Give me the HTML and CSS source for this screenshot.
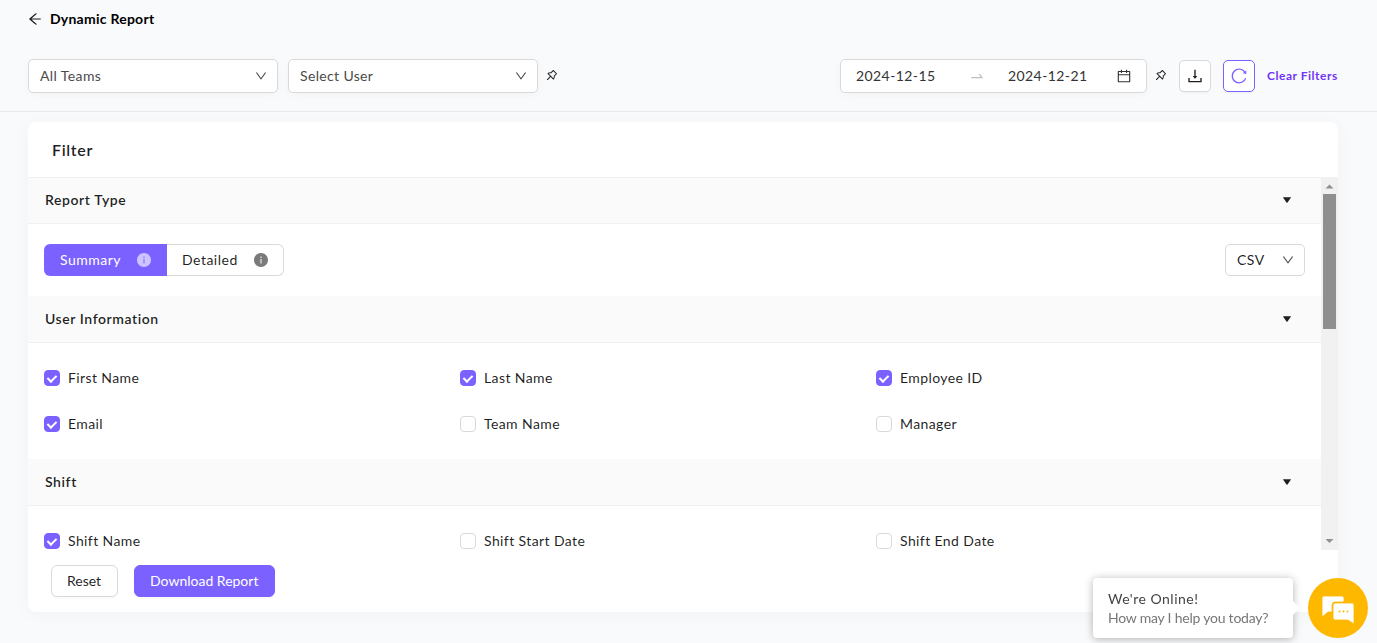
FILE: index.html
```
<!DOCTYPE html>
<html lang="en">
<head>
<meta charset="utf-8">
<title>Dynamic Report</title>
<link rel="stylesheet" href="styles.css">
</head>
<body>
<svg class="defs" aria-hidden="true">
  <symbol id="down" viewBox="64 64 896 896"><path d="M884 256h-75c-5.1 0-9.9 2.5-12.9 6.6L512 654.2 227.9 262.6c-3-4.1-7.8-6.6-12.9-6.6h-75c-6.5 0-10.3 7.4-6.5 12.7l352.6 486.1c12.8 17.6 39 17.6 51.7 0l352.6-486.1c3.9-5.3.1-12.7-6.4-12.7z"/></symbol>
  <symbol id="pin" viewBox="64 64 896 896"><path d="M878.3 392.1L631.9 145.7c-6.5-6.5-15-9.7-23.5-9.7s-17 3.2-23.5 9.7L423.8 306.9c-12.2-1.4-24.5-2-36.8-2-73.2 0-146.4 24.1-206.5 72.3a33.23 33.23 0 00-2.7 49.4l181.7 181.7-215.4 215.2a15.8 15.8 0 00-4.6 9.8l-3.4 37.2c-.9 9.4 6.6 17.4 15.9 17.4.5 0 1 0 1.5-.1l37.2-3.4c3.7-.3 7.2-2 9.8-4.6l215.4-215.4 181.7 181.7c6.5 6.5 15 9.7 23.5 9.7 9.7 0 19.3-4.2 25.9-12.4 56.3-70.3 79.7-158.3 70.2-243.4l161.1-161.1c12.9-12.8 12.9-33.8 0-46.8zM666.2 549.3l-24.5 24.5 3.8 34.4a259.92 259.92 0 01-30.4 153.9L262 408.8c12.9-7.1 26.3-13.1 40.3-17.9 27.2-9.4 55.7-14.1 84.7-14.1 9.6 0 19.3.5 28.9 1.6l34.4 3.8 24.5-24.5L608.5 224 800 415.5 666.2 549.3z"/></symbol>
  <symbol id="info" viewBox="64 64 896 896"><path d="M512 64C264.6 64 64 264.6 64 512s200.6 448 448 448 448-200.6 448-448S759.4 64 512 64zm32 664c0 4.4-3.6 8-8 8h-48c-4.4 0-8-3.6-8-8V456c0-4.4 3.6-8 8-8h48c4.4 0 8 3.6 8 8v272zm-32-344a48.01 48.01 0 010-96 48.01 48.01 0 010 96z"/></symbol>
  <symbol id="caret" viewBox="0 0 8 6"><path d="M.3.2h7.4q.4.1.1.6L4.500 5.500q-.5.5-1 0L.2.8Q-.1.3.3.2z"/></symbol>
</svg>

<header class="topbar">
  <div class="title-row">
    <svg class="icon icon-back" viewBox="64 64 896 896"><path d="M872 474H286.900l350.200-304c5.600-4.900 2.200-14-5.200-14h-88.500c-3.900 0-7.600 1.400-10.500 3.900L155 487.800a31.960 31.960 0 000 48.300L535.100 866c1.500 1.300 3.300 2 5.200 2h91.500c7.400 0 10.800-9.200 5.200-14L286.900 550H872c4.400 0 8-3.600 8-8v-60c0-4.400-3.600-8-8-8z"/></svg>
    <h1 class="title">Dynamic Report</h1>
  </div>
  <div class="toolbar">
    <div class="select">All Teams<svg class="icon icon-down"><use href="#down"/></svg></div>
    <div class="select select-user">Select User<svg class="icon icon-down"><use href="#down"/></svg></div>
    <svg class="icon icon-pin"><use href="#pin"/></svg>
    <div class="range">
      <span class="date">2024-12-15</span>
      <svg class="icon icon-swap" viewBox="0 0 1024 1024"><path d="M873.1 596.2l-164-208A32 32 0 00684 376h-64.800c-6.700 0-10.400 7.700-6.300 13l144.300 183H152c-4.400 0-8 3.600-8 8v60c0 4.400 3.600 8 8 8h695.900c26.800 0 41.700-30.800 25.200-51.800z"/></svg>
      <span class="date">2024-12-21</span>
      <svg class="icon icon-calendar" viewBox="64 64 896 896"><path d="M880 184H712v-64c0-4.400-3.600-8-8-8h-56c-4.400 0-8 3.600-8 8v64H384v-64c0-4.400-3.600-8-8-8h-56c-4.400 0-8 3.600-8 8v64H144c-17.700 0-32 14.300-32 32v664c0 17.700 14.300 32 32 32h736c17.700 0 32-14.300 32-32V216c0-17.700-14.300-32-32-32zm-40 656H184V460h656v380zM184 392V256h128v48c0 4.400 3.600 8 8 8h56c4.400 0 8-3.600 8-8v-48h256v48c0 4.400 3.600 8 8 8h56c4.400 0 8-3.600 8-8v-48h128v136H184z"/></svg>
    </div>
    <svg class="icon icon-pin icon-pin-right"><use href="#pin"/></svg>
    <div class="tool-button">
      <svg class="icon icon-tool" viewBox="64 64 896 896"><path d="M505.700 661a8 8 0 0012.600 0l112-141.700c4.100-5.200.4-12.900-6.300-12.900h-74.100V168c0-4.400-3.600-8-8-8h-60c-4.400 0-8 3.600-8 8v338.300H400c-6.700 0-10.400 7.700-6.300 12.900l112 141.800zM878 626h-60c-4.400 0-8 3.600-8 8v154H214V634c0-4.400-3.600-8-8-8h-60c-4.400 0-8 3.600-8 8v198c0 17.700 14.300 32 32 32h684c17.700 0 32-14.300 32-32V634c0-4.400-3.600-8-8-8z"/></svg>
    </div>
    <div class="tool-button tool-reload">
      <svg class="icon icon-tool" viewBox="64 64 896 896"><path d="M909.1 209.3l-56.400 44.100C775.800 155.100 656.200 92 521.900 92 290 92 102.300 279.500 102 511.500 101.700 743.700 289.800 932 521.900 932c181.300 0 335.800-115 394.600-276.100 1.500-4.200-.7-8.900-4.900-10.300l-56.700-19.500a8 8 0 00-10.100 4.800c-1.800 5-3.800 10-5.900 14.900-17.300 41-42.100 77.800-73.700 109.400A344.770 344.770 0 01655.900 829c-42.300 17.900-87.400 27-133.800 27-46.500 0-91.500-9.100-133.800-27A341.500 341.500 0 01279 755.200a342.160 342.160 0 01-73.700-109.400c-17.900-42.400-27-87.400-27-133.900s9.100-91.500 27-133.900c17.300-41 42.100-77.800 73.700-109.400 31.600-31.600 68.400-56.400 109.300-73.800 42.300-17.900 87.400-27 133.800-27 46.500 0 91.500 9.100 133.800 27a341.500 341.500 0 01109.300 73.800c9.900 9.900 19.200 20.400 27.800 31.400l-60.200 47a8 8 0 003 14.100l175.600 43c5 1.200 9.900-2.600 9.900-7.700l.8-180.900c-.1-6.600-7.800-10.300-13-6.200z"/></svg>
    </div>
    <a class="clear">Clear Filters</a>
  </div>
</header>

<main class="card">
  <h2 class="card-title">Filter</h2>
  <div class="scroll-area">
    <div class="sections">
      <div class="section-head section-head-first">Report Type<svg class="icon-caret"><use href="#caret"/></svg></div>
      <div class="report-type">
        <div class="segment">
          <div class="segment-item segment-active">Summary<svg class="icon icon-info"><use href="#info"/></svg></div>
          <div class="segment-item segment-plain">Detailed<svg class="icon icon-info"><use href="#info"/></svg></div>
        </div>
        <div class="format">CSV<svg class="icon icon-down"><use href="#down"/></svg></div>
      </div>
      <div class="section-head">User Information<svg class="icon-caret"><use href="#caret"/></svg></div>
      <div class="options">
        <label class="option"><span class="box checked"></span>First Name</label>
        <label class="option"><span class="box checked"></span>Last Name</label>
        <label class="option"><span class="box checked"></span>Employee ID</label>
        <label class="option"><span class="box checked"></span>Email</label>
        <label class="option"><span class="box"></span>Team Name</label>
        <label class="option"><span class="box"></span>Manager</label>
      </div>
      <div class="section-head">Shift<svg class="icon-caret"><use href="#caret"/></svg></div>
      <div class="options">
        <label class="option"><span class="box checked"></span>Shift Name</label>
        <label class="option"><span class="box"></span>Shift Start Date</label>
        <label class="option"><span class="box"></span>Shift End Date</label>
      </div>
    </div>
    <div class="scrollbar">
      <svg class="scroll-arrow" viewBox="0 0 17 16"><path d="M4.500 10.500 8.500 6.500l4 4z"/></svg>
      <div class="scroll-thumb"></div>
      <svg class="scroll-arrow" viewBox="0 0 17 16"><path d="M4.500 5h8l-4 4z"/></svg>
    </div>
  </div>
  <div class="actions">
    <div class="button button-reset">Reset</div>
    <div class="button button-primary">Download Report</div>
  </div>
</main>

<aside class="chat">
  <div class="chat-bubble">
    <div class="chat-title">We're Online!</div>
    <div class="chat-text">How may I help you today?</div>
  </div>
  <div class="chat-button">
    <svg class="chat-icon" viewBox="0 0 32 28">
      <path class="chat-shape" d="M2 0h18q2 0 2 2v4H13q-3 0-3 3v7H6L0 21V2Q0 0 2 0z"/>
      <path class="chat-shape" d="M13 7h17q2 0 2 2v19l-6-4H13q-2 0-2-2V9q0-2 2-2z"/>
      <g class="chat-dots"><circle cx="17.500" cy="15.500" r="1"/><circle cx="21.500" cy="15.500" r="1"/><circle cx="25.500" cy="15.500" r="1"/></g>
    </svg>
  </div>
</aside>
</body>
</html>
```
FILE: styles.css
```
*, *::before, *::after { box-sizing: border-box; }
body {
  margin: 0;
  height: 643px;
  overflow: hidden;
  background: #f9fafc;
  color: rgba(0, 0, 0, 0.88);
  font: 14px/22px Lato, sans-serif;
  letter-spacing: 0.4px;
  white-space: nowrap;
}
.defs { display: none; }
.icon { display: block; width: 12px; height: 12px; flex: none; fill: currentColor; }

.topbar { height: 112px; border-bottom: 1px solid #e8e9ec; padding: 8px 39px 0 28px; }
.title-row { display: flex; align-items: center; gap: 8px; height: 22px; }
.icon-back { width: 14px; height: 14px; }
.title { margin: 0; font-size: 14px; font-weight: 700; color: #000; letter-spacing: 0.25px; }
.toolbar { display: flex; align-items: center; height: 34px; margin-top: 29px; }
.select, .range, .tool-button, .format, .button {
  display: flex;
  align-items: center;
  background: #fff;
  border: 1px solid #d9d9d9;
  border-radius: 5px;
}
.select {
  justify-content: space-between;
  width: 250px;
  height: 34px;
  padding: 0 10px 0 11px;
  color: #4a4a4a;
  box-shadow: 0 2px 10px rgba(0, 0, 0, 0.03);
}
.select-user { margin-left: 10px; letter-spacing: 0.35px; }
.icon-pin { margin: -2px 0 0 8px; color: #222; }
.range { width: 307px; height: 34px; margin-left: auto; padding: 0 15px; color: #333; letter-spacing: 0.42px; box-shadow: 0 2px 10px rgba(0, 0, 0, 0.03); }
.date { width: 113px; }
.date + .icon-swap { margin-right: 23px; }
.date ~ .date { width: 109px; }
.icon-swap { width: 16px; height: 16px; color: #bfbfbf; }
.icon-calendar { width: 14px; height: 14px; }
.tool-button { justify-content: center; width: 32px; height: 32px; margin-left: 12px; box-shadow: 0 2px 0 rgba(0, 0, 0, 0.02); }
.icon-tool { width: 16px; height: 16px; }
.tool-reload { color: #7b61ff; border-color: #7b61ff; }
.clear { width: 71px; margin-left: 12px; color: #7036f5; font-size: 12px; font-weight: 700; letter-spacing: 0.52px; }

.card { width: 1310px; height: 490px; margin: 10px 0 0 28px; background: #fff; border-radius: 8px; box-shadow: 0 2px 20px rgba(0, 0, 0, 0.035); }
.card-title { height: 56px; margin: 0; padding-left: 24px; border-bottom: 1px solid #f0f0f0; font-size: 16px; line-height: 55px; font-weight: 600; letter-spacing: 0.65px; }
.scroll-area { display: flex; height: 372px; }
.sections { flex: 1; overflow: hidden; }
.section-head {
  display: flex;
  align-items: center;
  justify-content: space-between;
  height: 47px;
  padding: 0 30px 0 17px;
  background: #fafafa;
  border-bottom: 1px solid #f0f0f0;
  font-weight: 600;
  letter-spacing: 0.58px;
}
.section-head-first { height: 46px; padding-bottom: 1px; }
.icon-caret { width: 8px; height: 6px; fill: currentColor; }
.report-type { display: flex; justify-content: space-between; height: 72px; padding: 20px 16px; letter-spacing: 0.5px; }
.segment { display: flex; }
.segment-item { display: flex; align-items: center; justify-content: space-between; height: 32px; }
.segment-active { width: 123px; padding: 0 16px; background: #7b61ff; color: #fff; border-radius: 6px 0 0 6px; }
.segment-plain { width: 117px; padding: 0 15px; border: 1px solid #d9d9d9; border-left: 0; border-radius: 0 6px 6px 0; }
.icon-info { width: 14px; height: 14px; color: #7a7a7a; }
.segment-active .icon-info { color: #cdc3ff; }
.format { justify-content: space-between; width: 80px; height: 32px; padding: 0 10px 0 11px; }
.format .icon, .select .icon { color: #444; }
.options { display: grid; grid-template-columns: repeat(3, 416px); grid-auto-rows: 46px; height: 116px; padding: 12px 16px; }
.option { display: flex; align-items: center; gap: 8px; }
.box { display: flex; justify-content: center; width: 16px; height: 16px; border: 1px solid #d9d9d9; border-radius: 4px; background: #fff; }
.checked { background: #7b61ff; border-color: #7b61ff; }
.checked::after { content: ""; flex: none; width: 5.700px; height: 9.100px; margin-top: 1.500px; border: solid #fff; border-width: 0 2px 2px 0; transform: rotate(45deg); }

.scrollbar { display: flex; flex-direction: column; width: 17px; background: #f1f1f1; }
.scroll-arrow { display: block; width: 17px; height: 16px; fill: #8f8f8f; }
.scroll-thumb { width: 13px; height: 135px; margin: 0 2px auto; background: #8f8f8f; }

.actions { display: flex; gap: 16px; padding: 15px 23px; letter-spacing: 0; }
.button { height: 32px; padding: 0 15px; border-radius: 6px; box-shadow: 0 2px 0 rgba(0, 0, 0, 0.02); }
.button-reset { width: 67px; }
.button-primary { width: 141px; background: #7b61ff; border-color: #7b61ff; color: #fff; }

/* The chat launcher floats over the page corner. */
.chat { position: fixed; right: 9px; bottom: 5px; display: flex; gap: 15px; }
.chat-bubble { position: relative; width: 200px; height: 60px; padding: 11px 15px; background: #fff; border-radius: 4px; box-shadow: 0 1px 8px rgba(0, 0, 0, 0.3); line-height: 19px; }
.chat-bubble::after { content: ""; position: absolute; right: -5px; top: 25px; width: 10px; height: 10px; background: #fff; transform: rotate(45deg); }
.chat-title { color: #444; letter-spacing: 0.5px; }
.chat-text { color: #777; letter-spacing: -0.22px; }
.chat-button { display: flex; align-items: center; justify-content: center; width: 60px; height: 60px; border-radius: 50%; background: #ffb800; }
.chat-icon { width: 32px; height: 28px; margin-top: 4px; }
.chat-shape { fill: #fff; stroke: #ffb800; stroke-width: 0.8; }
.chat-dots { fill: #ffb800; }
```
